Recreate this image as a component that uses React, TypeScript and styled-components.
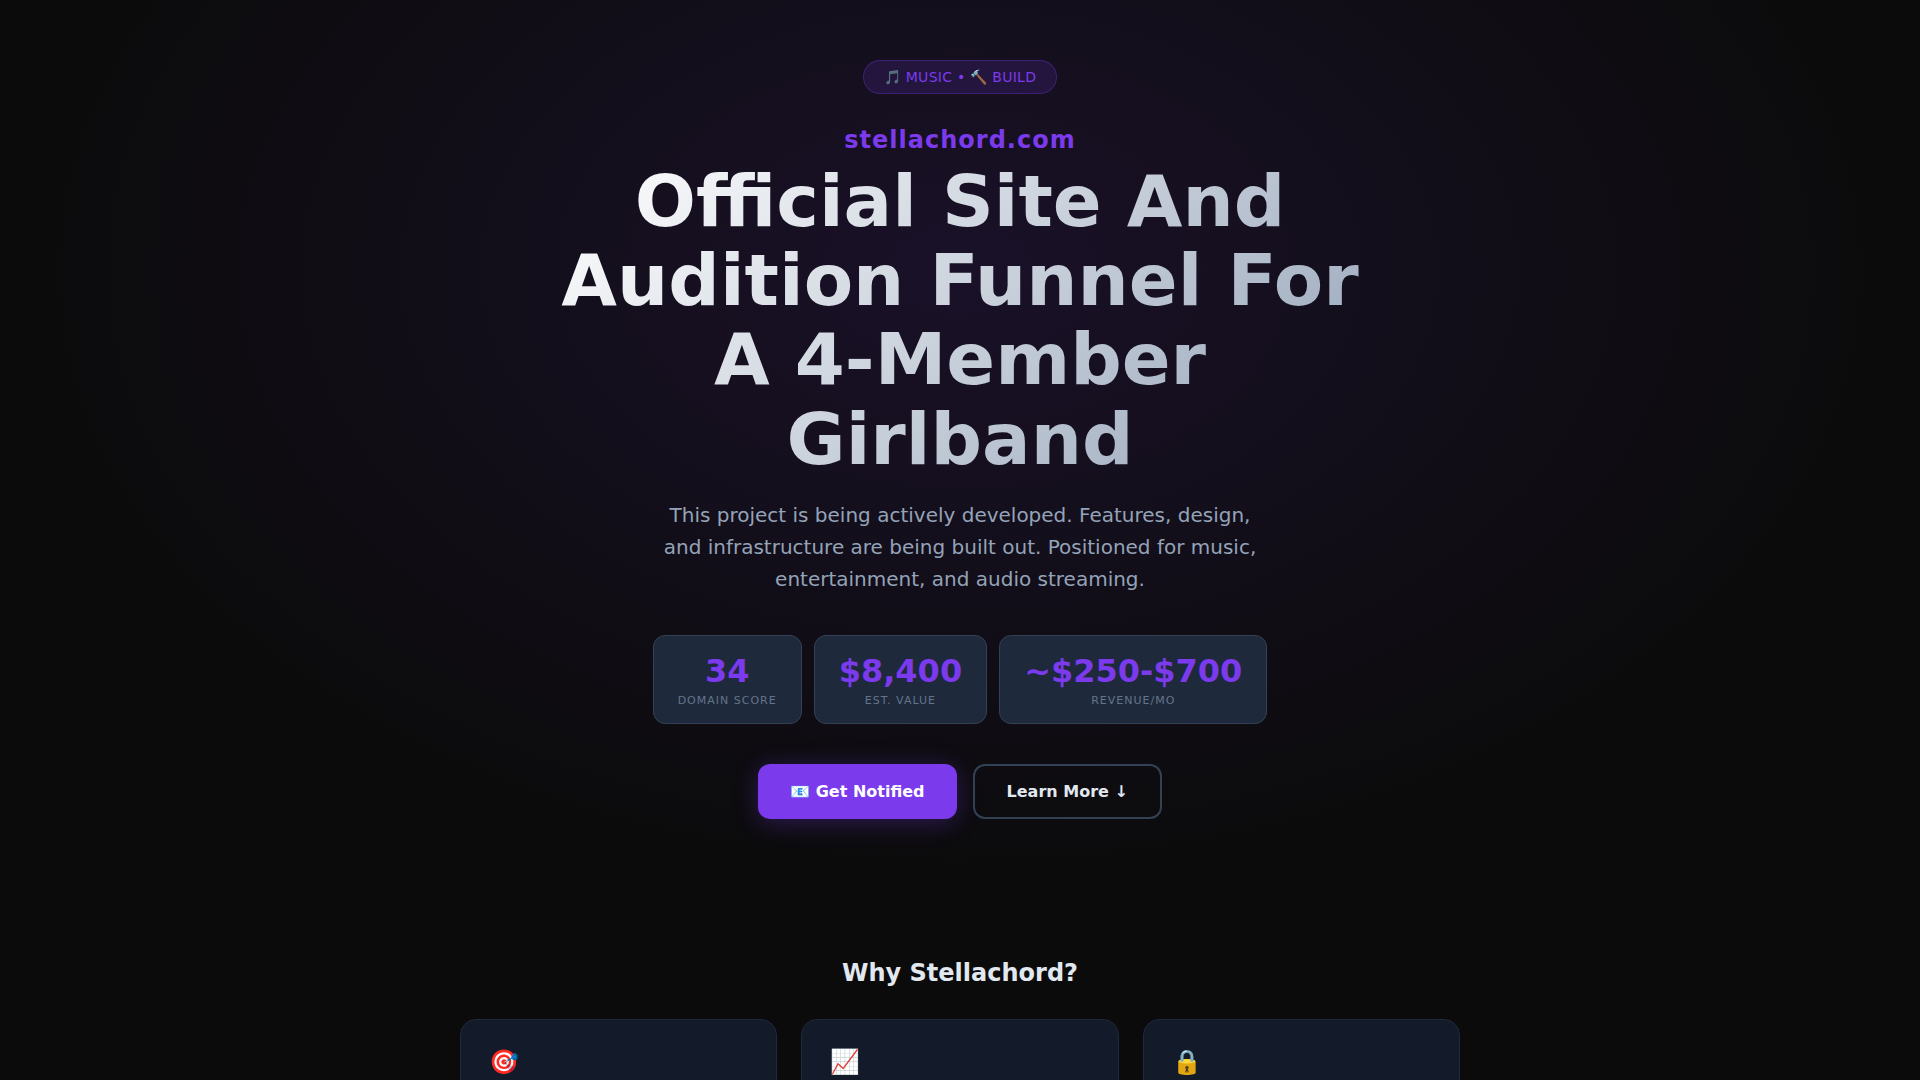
import React from "react";
import styled, { createGlobalStyle } from "styled-components";

const GlobalStyle = createGlobalStyle`
  *, *::before, *::after { box-sizing: border-box; }
  body {
    margin: 0;
    background: #0b0b0b;
    color: #e2e8f0;
    font-family: "DejaVu Sans", sans-serif;
    line-height: 1.6;
  }
  h1, h2, p, dl, dd, dt { margin: 0; }
`;

const Hero = styled.header`
  display: flex;
  flex-direction: column;
  align-items: center;
  padding: 60px 24px 80px;
  text-align: center;
  background: radial-gradient(ellipse at 50% 30%, rgba(124, 58, 237, 0.13) 0%, transparent 70%);
`;

const Badge = styled.div`
  padding: 6px 20px;
  margin-bottom: 24px;
  border: 1px solid rgba(124, 58, 237, 0.3);
  border-radius: 20px;
  background: rgba(124, 58, 237, 0.15);
  color: #7c3aed;
  font-size: 14px;
  line-height: 20px;
  letter-spacing: 0.02em;
  text-transform: uppercase;
`;

const Domain = styled.p`
  color: #7c3aed;
  font-size: 24px;
  font-weight: 700;
  line-height: 44px;
  letter-spacing: 1px;
`;

const Title = styled.h1`
  width: 100%;
  max-width: 800px;
  margin-bottom: 20px;
  background: linear-gradient(135deg, #ffffff 0%, #94a3b8 100%);
  background-clip: text;
  -webkit-background-clip: text;
  color: transparent;
  font-size: 72px;
  font-weight: 800;
  line-height: 1.1;
`;

const Lead = styled.p`
  max-width: 600px;
  margin-bottom: 40px;
  color: #94a3b8;
  font-size: 20px;
  line-height: 32px;
`;

const Stats = styled.dl`
  display: flex;
  flex-wrap: wrap;
  justify-content: center;
  gap: 12px;
  margin-bottom: 40px;
`;

const Stat = styled.div`
  display: flex;
  flex-direction: column-reverse;
  gap: 3px;
  padding: 16px 24px 14px;
  border: 1px solid #334155;
  border-radius: 12px;
  background: #1e293b;
`;

const StatLabel = styled.dt`
  color: #64748b;
  font-size: 11px;
  line-height: 16px;
  letter-spacing: 1px;
  text-transform: uppercase;
`;

const StatValue = styled.dd`
  color: #7c3aed;
  font-size: 32px;
  font-weight: 800;
  line-height: 38px;
`;

const Actions = styled.div`
  display: flex;
  flex-wrap: wrap;
  justify-content: center;
  gap: 16px;
`;

const Button = styled.button<{ $primary?: boolean }>`
  padding: ${(p) => (p.$primary ? "14px 32px" : "12px 32px")};
  border: ${(p) => (p.$primary ? "0" : "2px solid #334155")};
  border-radius: 12px;
  background: ${(p) => (p.$primary ? "#7c3aed" : "transparent")};
  box-shadow: ${(p) => (p.$primary ? "0 4px 24px rgba(124, 58, 237, 0.3)" : "none")};
  color: ${(p) => (p.$primary ? "#ffffff" : "#e2e8f0")};
  font-family: inherit;
  font-size: 16px;
  font-weight: 700;
  line-height: 27px;
  cursor: pointer;
`;

const Why = styled.section`
  max-width: 1048px;
  margin: 0 auto;
  padding: 55px 24px 80px;
`;

const SectionTitle = styled.h2`
  margin-bottom: 27px;
  font-size: 24px;
  font-weight: 700;
  line-height: 38px;
  text-align: center;
`;

const Cards = styled.div`
  display: grid;
  grid-template-columns: repeat(auto-fit, minmax(280px, 1fr));
  gap: 24px;
`;

const Card = styled.article`
  min-height: 200px;
  padding: 24px 28px;
  border: 1px solid #1e293b;
  border-radius: 16px;
  background: #131a2a;
`;

const CardIcon = styled.div`
  font-size: 24px;
  line-height: 36px;
`;

const stats = [
  { value: "34", label: "Domain Score" },
  { value: "$8,400", label: "Est. Value" },
  { value: "~$250-$700", label: "Revenue/mo" },
];

const reasons = ["🎯", "📈", "🔒"];

export default function App() {
  return (
    <>
      <GlobalStyle />
      <Hero>
        <Badge>🎵 Music • 🔨 Build</Badge>
        <Domain>stellachord.com</Domain>
        <Title>Official Site And Audition Funnel For A 4-Member Girlband</Title>
        <Lead>
          This project is being actively developed. Features, design, and infrastructure are being
          built out. Positioned for music, entertainment, and audio streaming.
        </Lead>
        <Stats>
          {stats.map((s) => (
            <Stat key={s.label}>
              <StatLabel>{s.label}</StatLabel>
              <StatValue>{s.value}</StatValue>
            </Stat>
          ))}
        </Stats>
        <Actions>
          <Button type="button" $primary>📧 Get Notified</Button>
          <Button type="button">Learn More ↓</Button>
        </Actions>
      </Hero>
      <Why>
        <SectionTitle>Why Stellachord?</SectionTitle>
        <Cards>
          {reasons.map((icon) => (
            <Card key={icon}>
              <CardIcon>{icon}</CardIcon>
            </Card>
          ))}
        </Cards>
      </Why>
    </>
  );
}
